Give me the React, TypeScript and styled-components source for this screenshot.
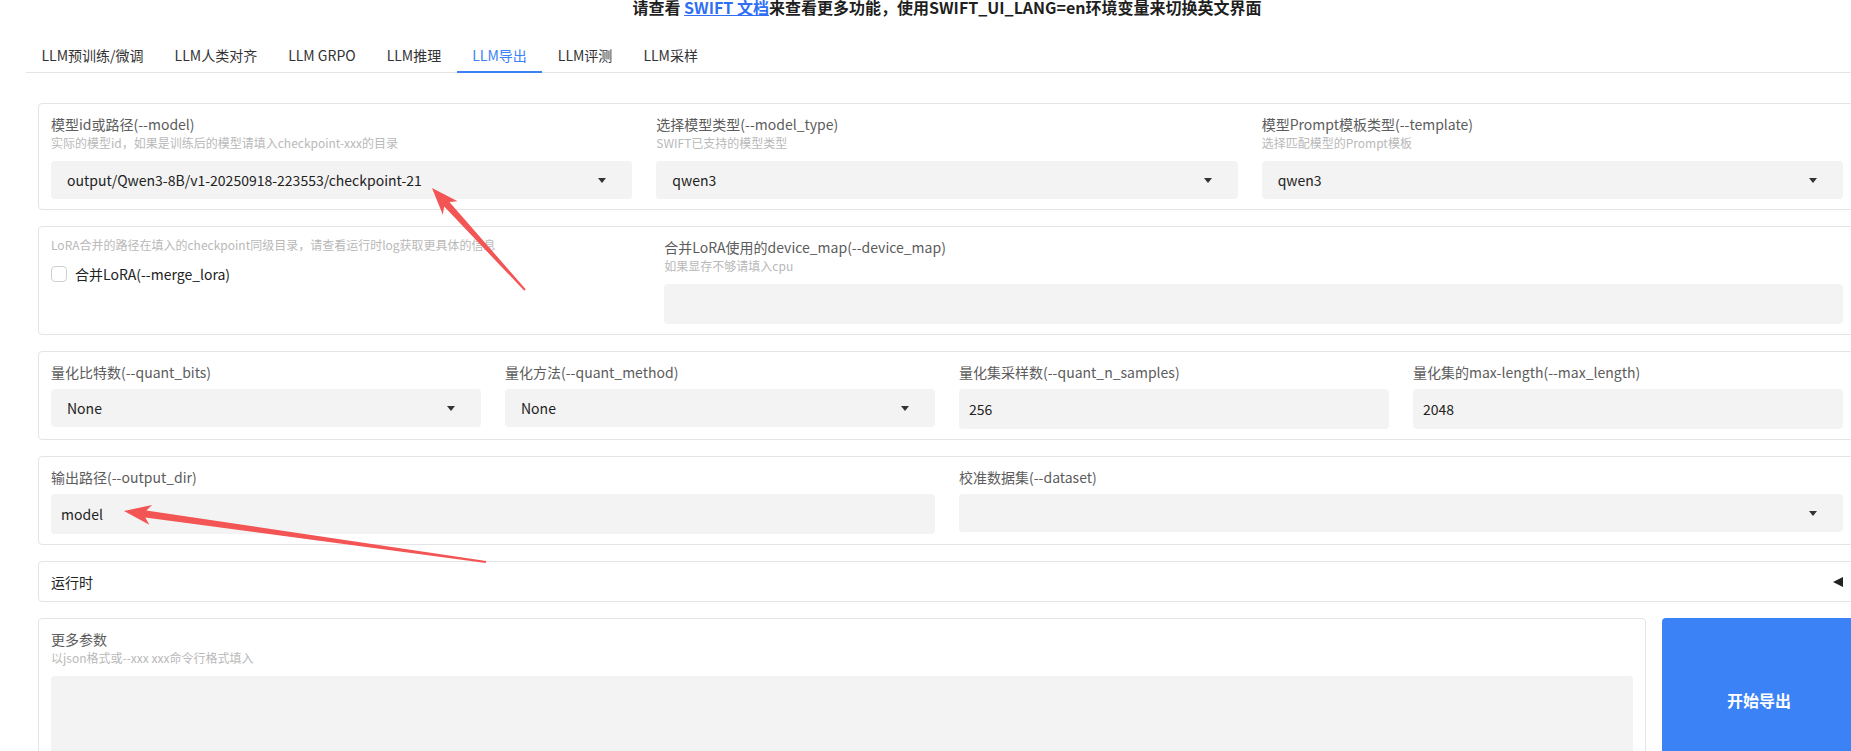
import React from "react";
import styled, { createGlobalStyle } from "styled-components";

const GlobalStyle = createGlobalStyle`
  html, body {
    margin: 0;
    padding: 0;
    background: #ffffff;
    overflow: hidden;
  }
  body {
    font-family: "Noto Sans CJK SC", "Noto Sans", sans-serif;
    color: #222222;
  }
  * {
    box-sizing: border-box;
  }
`;

const Page = styled.div`
  position: relative;
  width: 1868px;
  height: 751px;
  padding-left: 26px;
  overflow: hidden;
`;

const Notice = styled.div`
  margin-top: -3px;
  text-align: center;
  font-size: 16px;
  font-weight: 700;
  line-height: 20px;
  color: #1f1f1f;

  a {
    color: #2f6ef5;
    text-decoration: underline;
  }
`;

const TabBar = styled.div`
  display: flex;
  margin-top: 21px;
  border-bottom: 1px solid #e4e4e7;
`;

const Tab = styled.div<{ $active?: boolean }>`
  position: relative;
  padding: 7px 15.5px;
  font-size: 14px;
  line-height: 20px;
  color: ${(p) => (p.$active ? "#3b82f6" : "#333333")};

  &::after {
    content: "";
    display: ${(p) => (p.$active ? "block" : "none")};
    position: absolute;
    left: 0;
    right: 0;
    bottom: -1px;
    height: 2px;
    background: #3b82f6;
  }
`;

const Content = styled.div`
  display: flex;
  flex-direction: column;
  gap: 16px;
  padding: 30px 12px 0;
`;

const Panel = styled.div`
  border: 1px solid #e4e4e4;
  border-radius: 4px;
  padding: 11px 12px 10px;
  background: #ffffff;
`;

const Grid = styled.div<{ $cols: string }>`
  display: grid;
  grid-template-columns: ${(p) => p.$cols};
  column-gap: 24px;
  align-items: start;
`;

const Label = styled.div`
  font-size: 14px;
  line-height: 18px;
  color: #5c5c5c;
  white-space: nowrap;
`;

const Help = styled.div<{ $tight?: boolean }>`
  font-size: 12px;
  line-height: ${(p) => (p.$tight ? "14px" : "20px")};
  color: #b9b9b9;
  white-space: nowrap;
`;

const Control = styled.div<{ $select?: boolean }>`
  display: flex;
  align-items: center;
  justify-content: space-between;
  margin-top: 8px;
  height: ${(p) => (p.$select ? "38px" : "40px")};
  padding: ${(p) => (p.$select ? "0 26px 0 16px" : "0 10px")};
  background: #f3f3f3;
  border-radius: 4px;
  font-size: 14px;
  color: #222222;
  white-space: nowrap;
`;

const Caret = styled.span`
  width: 0;
  height: 0;
  border-left: 4px solid transparent;
  border-right: 4px solid transparent;
  border-top: 5px solid #333333;
`;

const CheckRow = styled.label`
  display: flex;
  align-items: center;
  gap: 8px;
  height: 20px;
  margin-top: 12px;
  font-size: 14px;
  color: #222222;
`;

const Box = styled.span`
  width: 16px;
  height: 16px;
  border: 1px solid #cfcfcf;
  border-radius: 4px;
  background: #ffffff;
`;

const Accordion = styled.div`
  display: flex;
  align-items: center;
  justify-content: space-between;
  height: 41px;
  padding: 0 12px;
  border: 1px solid #e4e4e4;
  border-radius: 4px;
  font-size: 14px;
  color: #222222;
`;

const LeftCaret = styled.span`
  width: 0;
  height: 0;
  border-top: 5px solid transparent;
  border-bottom: 5px solid transparent;
  border-right: 10px solid #222222;
`;

const BottomRow = styled.div`
  display: flex;
  gap: 16px;
  align-items: stretch;
`;

const ParamsPanel = styled(Panel)`
  flex: 1;
`;

const TextArea = styled.div`
  margin-top: 8px;
  height: 95px;
  background: #f3f3f3;
  border-radius: 4px;
`;

const RunButton = styled.button`
  width: 194px;
  border: none;
  border-radius: 4px;
  background: #3b82f6;
  color: #ffffff;
  font-family: inherit;
  font-size: 16px;
  font-weight: 600;
  cursor: pointer;
`;

const Overlay = styled.svg`
  position: absolute;
  left: 0;
  top: 0;
  pointer-events: none;
`;

type FieldProps = {
  label: string;
  help?: string;
  value?: string;
  select?: boolean;
};

const Field: React.FC<FieldProps> = ({ label, help, value = "", select }) => (
  <div>
    <Label>{label}</Label>
    {help && <Help>{help}</Help>}
    <Control $select={select}>
      <span>{value}</span>
      {select && <Caret />}
    </Control>
  </div>
);

const tabs = [
  "LLM预训练/微调",
  "LLM人类对齐",
  "LLM GRPO",
  "LLM推理",
  "LLM导出",
  "LLM评测",
  "LLM采样",
];

// red annotation arrow: tail -> tip
const arrowPoints = (tx: number, ty: number, hx: number, hy: number) => {
  const head = 27;
  const wing = 10;
  const neck = 3.5;
  const tail = 1;
  const dx = hx - tx;
  const dy = hy - ty;
  const len = Math.hypot(dx, dy);
  const ux = dx / len;
  const uy = dy / len;
  const nx = -uy;
  const ny = ux;
  const bx = hx - ux * head;
  const by = hy - uy * head;
  const jx = hx - ux * (head - 5);
  const jy = hy - uy * (head - 5);
  return [
    [hx, hy],
    [bx + nx * wing, by + ny * wing],
    [jx + nx * neck, jy + ny * neck],
    [tx + nx * tail, ty + ny * tail],
    [tx - nx * tail, ty - ny * tail],
    [jx - nx * neck, jy - ny * neck],
    [bx - nx * wing, by - ny * wing],
  ]
    .map((p) => p.map((v) => v.toFixed(1)).join(","))
    .join(" ");
};

export default function App() {
  return (
    <Page>
      <GlobalStyle />
      <Notice>
        请查看 <a href="#">SWIFT 文档</a>来查看更多功能，使用SWIFT_UI_LANG=en环境变量来切换英文界面
      </Notice>

      <TabBar>
        {tabs.map((t) => (
          <Tab key={t} $active={t === "LLM导出"}>
            {t}
          </Tab>
        ))}
      </TabBar>

      <Content>
        <Panel>
          <Grid $cols="1fr 1fr 1fr">
            <Field
              label="模型id或路径(--model)"
              help="实际的模型id，如果是训练后的模型请填入checkpoint-xxx的目录"
              value="output/Qwen3-8B/v1-20250918-223553/checkpoint-21"
              select
            />
            <Field
              label="选择模型类型(--model_type)"
              help="SWIFT已支持的模型类型"
              value="qwen3"
              select
            />
            <Field
              label="模型Prompt模板类型(--template)"
              help="选择匹配模型的Prompt模板"
              value="qwen3"
              select
            />
          </Grid>
        </Panel>

        <Panel>
          <Grid $cols="1fr 2fr">
            <div>
              <Help $tight>
                LoRA合并的路径在填入的checkpoint同级目录，请查看运行时log获取更具体的信息
              </Help>
              <CheckRow>
                <Box />
                合并LoRA(--merge_lora)
              </CheckRow>
            </div>
            <Field
              label="合并LoRA使用的device_map(--device_map)"
              help="如果显存不够请填入cpu"
            />
          </Grid>
        </Panel>

        <Panel>
          <Grid $cols="1fr 1fr 1fr 1fr">
            <Field label="量化比特数(--quant_bits)" value="None" select />
            <Field label="量化方法(--quant_method)" value="None" select />
            <Field label="量化集采样数(--quant_n_samples)" value="256" />
            <Field label="量化集的max-length(--max_length)" value="2048" />
          </Grid>
        </Panel>

        <Panel>
          <Grid $cols="1fr 1fr">
            <Field label="输出路径(--output_dir)" value="model" />
            <Field label="校准数据集(--dataset)" select />
          </Grid>
        </Panel>

        <Accordion>
          <span>运行时</span>
          <LeftCaret />
        </Accordion>

        <BottomRow>
          <ParamsPanel>
            <Label>更多参数</Label>
            <Help>以json格式或--xxx xxx命令行格式填入</Help>
            <TextArea />
          </ParamsPanel>
          <RunButton>开始导出</RunButton>
        </BottomRow>
      </Content>

      <Overlay width="1868" height="751" viewBox="0 0 1868 751">
        <polygon points={arrowPoints(525, 290, 432, 188)} fill="#f35454" />
        <polygon points={arrowPoints(486, 562, 124, 511)} fill="#f35454" />
      </Overlay>
    </Page>
  );
}
